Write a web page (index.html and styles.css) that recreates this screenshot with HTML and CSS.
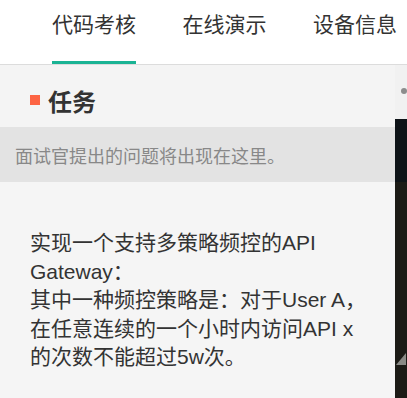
FILE: index.html
```html
<!DOCTYPE html>
<html lang="zh-CN">
  <head>
    <meta charset="UTF-8" />
    <meta name="viewport" content="width=device-width, initial-scale=1.0" />
    <title>代码考核</title>
    <link rel="stylesheet" href="styles.css">
  </head>
  <body>
    <div class="page">
      <nav class="tabs">
        <span class="tab active">代码考核</span>
        <span class="tab">在线演示</span>
        <span class="tab">设备信息</span>
      </nav>

      <div class="main">
        <section class="task-panel">
          <div class="task-head">
            <span class="task-mark"></span>
            <h2 class="task-title">任务</h2>
          </div>
          <div class="task-hint">面试官提出的问题将出现在这里。</div>
          <div class="task-body">
            <p>实现一个支持多策略频控的API Gateway：</p>
            <p>其中一种频控策略是：对于User A，在任意连续的一个小时内访问API x的次数不能超过5w次。</p>
          </div>
        </section>

        <aside class="side">
          <div class="side-head"><span class="side-dot"></span></div>
          <div class="side-bar"></div>
          <div class="side-body">
            <svg class="side-icon" width="11" height="13" viewBox="0 0 11 13">
              <path d="M1 12 L11 0 L11 12 Z" fill="#8a8a86" />
            </svg>
          </div>
        </aside>
      </div>
    </div>
  </body>
</html>
```

FILE: styles.css
```css
* {
  box-sizing: border-box;
  margin: 0;
  padding: 0;
}

body {
  font-family: "Liberation Sans", "Noto Sans CJK SC", sans-serif;
  color: #333;
  background: #fff;
}

.page {
  display: flex;
  flex-direction: column;
  min-height: 100vh;
}

.tabs {
  display: flex;
  gap: 46.5px;
  height: 65px;
  padding-left: 52px;
  border-bottom: 1px solid #dcdcdc;
  background: #fff;
}

.tab {
  font-size: 21px;
  line-height: 50px;
  height: 64px;
  color: #333;
  white-space: nowrap;
  border-bottom: 3px solid transparent;
}

.tab.active {
  border-bottom-color: #1ab394;
}

.main {
  flex: 1;
  display: flex;
}

.task-panel {
  width: 396px;
  display: flex;
  flex-direction: column;
  background: #f5f5f5;
}

.task-head {
  display: flex;
  align-items: center;
  gap: 8px;
  height: 62px;
  padding: 8px 0 0 30px;
  background: #f4f4f4;
}

.task-mark {
  width: 10px;
  height: 10px;
  background: #fd6444;
}

.task-title {
  font-size: 24px;
  font-weight: 700;
  color: #333;
}

.task-hint {
  display: flex;
  align-items: center;
  height: 55px;
  padding-left: 15px;
  font-size: 18px;
  color: #888;
  background: #e3e3e3;
}

.task-body {
  flex: 1;
  padding: 47px 26px 0 30px;
  font-size: 21px;
  line-height: 28.5px;
  color: #333;
  background: #f5f5f5;
}

.side {
  flex: 1;
  display: flex;
  flex-direction: column;
}

.side-head {
  height: 54px;
  padding: 23px 0 0 6px;
  background: #f1f1f1;
}

.side-dot {
  display: block;
  width: 6px;
  height: 6px;
  border-radius: 50%;
  background: #8c8c8c;
}

.side-bar {
  height: 63px;
  background: #0e1317;
}

.side-body {
  flex: 1;
  padding-top: 171px;
  background: #1c1b16;
}

.side-icon {
  display: block;
}
```
